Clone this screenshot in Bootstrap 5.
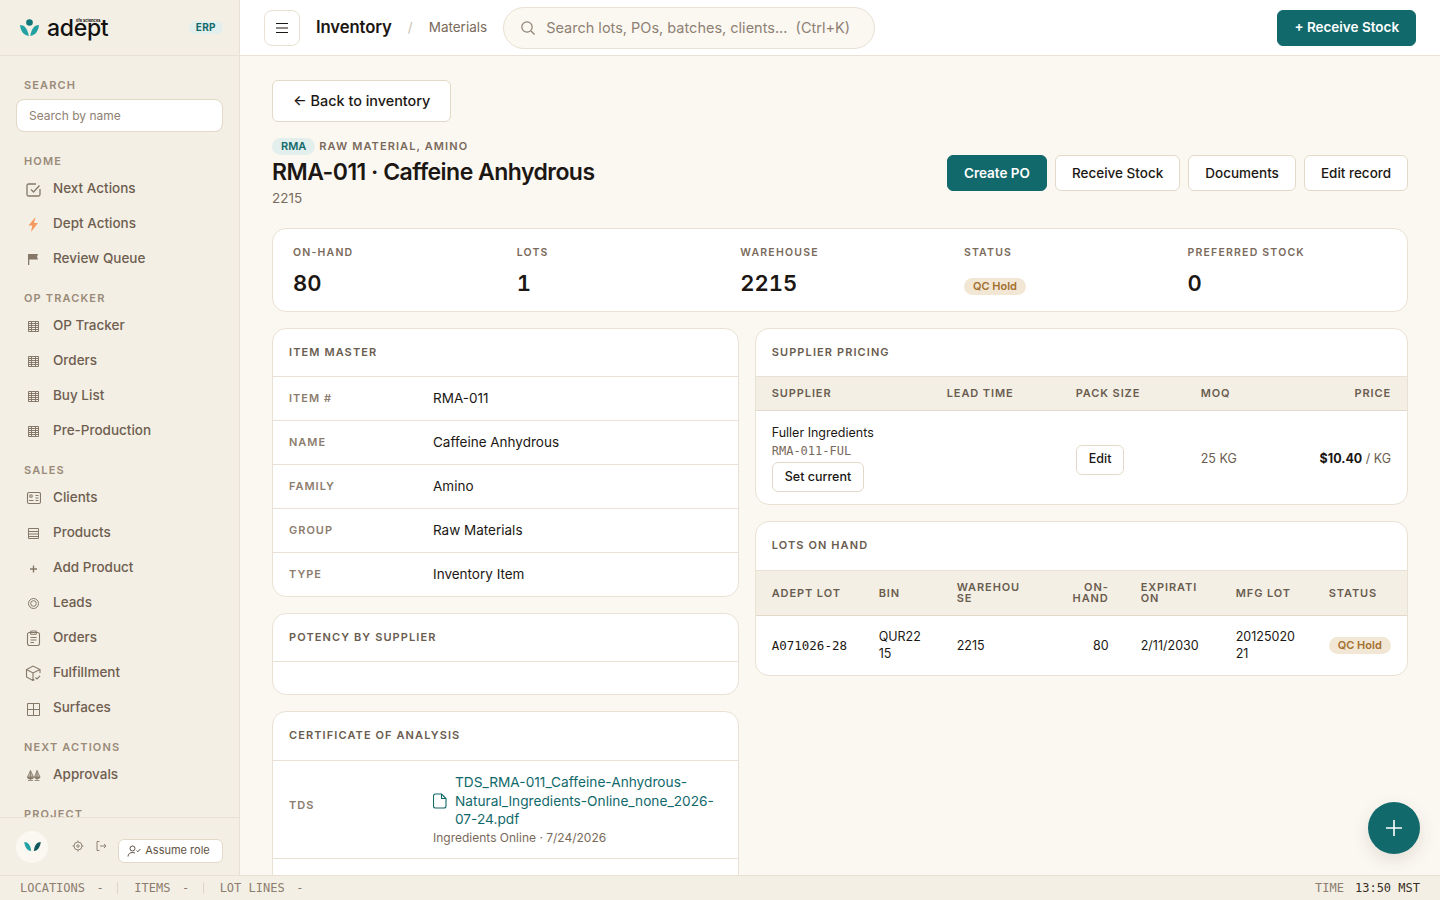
<!DOCTYPE html>
<html lang="en">
<head>
<meta charset="UTF-8">
<title>RMA-011 Caffeine Anhydrous</title>
<link href="https://cdn.jsdelivr.net/npm/bootstrap@5.3.0/dist/css/bootstrap.min.css" rel="stylesheet">
<style>
    :root { --line: #e9e1d3; --teal: #11696b; --ink: #1c1713; --mut: #7a6a5b; --sand: #f3efe5; }
    html, body { height: 100%; overflow: hidden; }
    body { font-family: "Inter", sans-serif; font-size: 13.5px; color: var(--ink); background: #fbf8f2; }
    .mono { font-family: "DejaVu Sans Mono", monospace; }
    .shell { height: 875px; }

    .side { width: 240px; flex: none; background: var(--sand); border-right: 1px solid var(--line); }
    .side-brand { height: 56px; padding: 0 16px 0 20px; border-bottom: 1px solid var(--line); }
    .brand-word { display: block; font-size: 23px; line-height: 24px; font-weight: 500; letter-spacing: -.3px; color: #111; }
    .brand-sub { position: absolute; left: 29px; top: 3px; font-size: 4px; line-height: 1; font-weight: 700; color: #111; white-space: nowrap; }
    .erp-pill { font-size: 10px; font-weight: 700; letter-spacing: .4px; color: var(--teal); background: #e3efec; border-radius: 10px; padding: 2px 7px; line-height: 9px; }
    .side-scroll { flex: 1 1 0; min-height: 0; overflow: hidden; padding: 22px 16px 0; }
    .side-label { font-size: 11px; line-height: 14px; font-weight: 600; letter-spacing: 1.15px; color: #9a8a78; padding-left: 8px; margin-bottom: 3px; }
    .side-group { margin-bottom: 15px; }
    .side-search.form-control { height: 33px; font-size: 12px; padding: 0 12px; border: 1px solid #e3d9c8; border-radius: 8px; margin-top: 7px; margin-bottom: 22px; color: var(--ink); }
    .side-search::placeholder { color: #8e8072; }
    .side-link { height: 35px; padding-left: 9px; gap: 12px; color: #6f5e50; font-weight: 500; text-decoration: none; }
    .side-link span { position: relative; top: -.5px; }
    .side-link svg { width: 16px; height: 16px; flex: none; color: #857868; }
    .side-foot { height: 58px; border-top: 1px solid var(--line); padding: 0 16px; }
    .avatar { width: 32px; height: 32px; border-radius: 50%; background: #fbf8f2; }
    .foot-icons { margin-left: 24px; gap: 11px; margin-top: -1px; color: #8f8272; }
    .foot-icons svg { width: 12px; height: 12px; }
    .assume.btn { margin-left: auto; margin-top: 8px; height: 24px; width: 105px; padding: 0 4px 0 0; font-size: 11px; color: #5f5245; background: #fff; border: 1px solid #e3d9c8; border-radius: 6px; gap: 4px; }

    .top { height: 56px; background: #fff; border-bottom: 1px solid var(--line); padding: 0 24px; }
    .burger.btn { width: 36px; height: 36px; padding: 0; border: 1px solid var(--line); border-radius: 8px; background: #fff; color: var(--ink); }
    .crumb-main { font-size: 16.7px; font-weight: 600; margin-left: 16px; letter-spacing: -.1px; }
    .crumb-sep { color: #c9bfb1; margin-left: 16px; }
    .crumb-sub { color: var(--mut); margin-left: 16px; }
    .find { width: 372px; height: 42px; margin-left: 16px; border: 1px solid var(--line); border-radius: 21px; background: #fbf8f2; padding: 0 16px; gap: 10px; color: #8e8072; font-size: 14.5px; }
    .teal-btn.btn { background: var(--teal); border-color: var(--teal); color: #fff; font-weight: 600; font-size: 13.5px; border-radius: 6px; height: 36px; padding: 0 16px; }
    .line-btn.btn { background: #fff; border: 1px solid #e3d9c8; color: var(--ink); font-weight: 500; font-size: 13.5px; border-radius: 6px; height: 36px; padding: 0 16px; }

    .page { flex: 1 1 0; min-height: 0; overflow: hidden; padding: 24px 32px 0; }
    .back.btn { height: 42px; font-size: 14.4px; padding: 0 20px; margin-bottom: 16px; border-radius: 6px; }
    .kind-pill { font-size: 11px; font-weight: 600; line-height: 17px; color: var(--teal); background: #e3efec; border-radius: 9px; padding: 0 9px; }
    .eyebrow { font-size: 11px; font-weight: 600; letter-spacing: 1.1px; color: var(--mut); margin-left: 4px; }
    .page-title { font-size: 23px; line-height: 30px; font-weight: 600; margin: 2px 0 1px; letter-spacing: -.53px; }
    .page-sub { color: var(--mut); line-height: 20px; }
    .head-actions { margin-bottom: 17px; }

    .panel.card { border: 1px solid var(--line); border-radius: 14px; background: #fff; overflow: hidden; --bs-card-inner-border-radius: 13px; }
    .stats { display: grid; grid-template-columns: repeat(5, 1fr); gap: 24px; padding: 17px 20px 0; height: 84px; margin-top: 20px; margin-bottom: 16px; }
    .stat-label { font-size: 10.5px; line-height: 14px; font-weight: 600; letter-spacing: 1.2px; color: var(--mut); }
    .stat-value { font-size: 22px; line-height: 30px; font-weight: 600; margin-top: 8px; font-variant-numeric: tabular-nums; }
    .stat-pill { margin-top: 15px; }
    .hold { display: inline-block; font-size: 11px; line-height: 17px; font-weight: 600; color: #a3702f; background: #f2e6d4; border-radius: 9px; padding: 0 9px; }
    .cols { display: grid; grid-template-columns: 5fr 7fr; gap: 16px; align-items: start; }
    .stack { display: flex; flex-direction: column; gap: 16px; }
    .panel-head { font-size: 11px; line-height: 14px; font-weight: 600; letter-spacing: 1.1px; color: #6a5c4f; padding: 16px 16px 16px; height: 47px; }
    .panel-head.tall { height: 48px; }
    .kv { display: flex; align-items: center; border-top: 1px solid var(--line); height: 44px; padding: 0 16px; }
    .kv-key { width: 144px; flex: none; font-size: 11px; font-weight: 600; letter-spacing: 1px; color: #8c7d6e; }
    .kv-key.raised { margin-bottom: 9px; }
    .file-link { color: var(--teal); text-decoration: none; font-size: 13.7px; line-height: 18.5px; display: block; }
    .file-meta { font-size: 12px; line-height: 17px; color: var(--mut); }

    .data.table { margin: 0; table-layout: fixed; font-size: 12.5px; --bs-table-border-color: var(--line); }
    .data.table th { background: var(--sand); font-size: 11px; line-height: 11px; font-weight: 600; letter-spacing: .9px; color: #6a5c4f; padding: 11px 16px; border-top: 1px solid var(--line); border-bottom: 1px solid #e3d9c8; vertical-align: middle; overflow-wrap: anywhere; }
    .data.table td { padding: 12px 16px 12px; vertical-align: middle; border-bottom: 0; color: var(--ink); overflow-wrap: anywhere; }
    .data.table td.nudge { padding-top: 16px; }
    .lots-table.table td { line-height: 17.5px; padding: 8px 16px; height: 59px; }
    .lots-table.table th { height: 45px; padding-top: 0; padding-bottom: 0; }
    .small-btn.btn { height: 30px; font-size: 12.5px; padding: 0 12px; line-height: 1; }
    .set-btn { margin-top: 2px; }
    .sup-code { font-size: 12px; color: #77695b; line-height: 18px; }
    .soft { color: #6a5c4f !important; }

    .fab { position: fixed; left: 1368px; top: 802px; width: 52px; height: 52px; border-radius: 50%; background: var(--teal); border: 0; box-shadow: 0 6px 18px rgba(60, 40, 20, .12); }
    .status { height: 25px; background: var(--sand); border-top: 1px solid var(--line); padding: 0 20px; font-size: 12px; color: #8c7d6e; }
    .status-sep { width: 1px; height: 12px; background: #e0d5c3; margin: 0 16px 0 13.5px; }
    .status-dash { margin-left: 11.5px; }
    .status-time { margin-left: 11px; color: #3a2f26; }
</style>
</head>
<body>
<div class="shell d-flex">
    <aside class="side d-flex flex-column">
        <div class="side-brand d-flex align-items-center justify-content-between">
            <div class="d-flex align-items-center gap-2">
                <svg width="19" height="18" viewBox="0 0 19 18"><circle cx="9.500" cy="3.500" r="3.300" fill="#11787a"/><path d="M0 6c4 0 7.500 3 8.800 11C3.500 16.500.5 11.500 0 6z" fill="#22a0a2"/><path d="M19 6c-4 0-7.500 3-8.800 11C15.500 16.500 18.500 11.500 19 6z" fill="#22a0a2"/></svg>
                <div class="position-relative"><span class="brand-word">adept</span><span class="brand-sub">life sciences</span></div>
            </div>
            <span class="erp-pill">ERP</span>
        </div>
        <div class="side-scroll">
            <div class="side-label">SEARCH</div>
            <input class="form-control side-search" placeholder="Search by name">

            <div class="side-group">
                <div class="side-label">HOME</div>
                <a class="side-link d-flex align-items-center" href="#"><svg viewBox="0 0 16 16" fill="none" stroke="currentColor" stroke-width="1.300" overflow="visible"><path d="M15 8v5.500a1.500 1.500 0 0 1-1.500 1.500h-10A1.500 1.500 0 0 1 2 13.500V4.500A1.500 1.500 0 0 1 3.500 3H11"/><path d="M6 8.500 8.500 11l6-6.500"/></svg><span>Next Actions</span></a>
                <a class="side-link d-flex align-items-center" href="#"><svg viewBox="0 0 16 16"><path d="M10.500 1 3.500 9.500h3.800L6 16 13 7H9z" fill="#f59a5f"/></svg><span>Dept Actions</span></a>
                <a class="side-link d-flex align-items-center" href="#"><svg viewBox="0 0 16 16"><path d="M3 3h10l-1 2.800 1 2.700H4.300V14H3z" fill="currentColor"/></svg><span>Review Queue</span></a>
            </div>
            <div class="side-group">
                <div class="side-label">OP TRACKER</div>
                <a class="side-link d-flex align-items-center" href="#"><svg viewBox="0 0 16 16" fill="none" stroke="currentColor"><path d="M3.500 3.500h10v10h-10zM3.500 5.500h10M3.500 7.500h10M3.500 9.500h10M3.500 11.500h10M6.500 3.500v10M10.500 3.500v10"/></svg><span>OP Tracker</span></a>
                <a class="side-link d-flex align-items-center" href="#"><svg viewBox="0 0 16 16" fill="none" stroke="currentColor"><path d="M3.500 3.500h10v10h-10zM3.500 5.500h10M3.500 7.500h10M3.500 9.500h10M3.500 11.500h10M6.500 3.500v10M10.500 3.500v10"/></svg><span>Orders</span></a>
                <a class="side-link d-flex align-items-center" href="#"><svg viewBox="0 0 16 16" fill="none" stroke="currentColor"><path d="M3.500 3.500h10v10h-10zM3.500 5.500h10M3.500 7.500h10M3.500 9.500h10M3.500 11.500h10M6.500 3.500v10M10.500 3.500v10"/></svg><span>Buy List</span></a>
                <a class="side-link d-flex align-items-center" href="#"><svg viewBox="0 0 16 16" fill="none" stroke="currentColor"><path d="M3.500 3.500h10v10h-10zM3.500 5.500h10M3.500 7.500h10M3.500 9.500h10M3.500 11.500h10M6.500 3.500v10M10.500 3.500v10"/></svg><span>Pre-Production</span></a>
            </div>
            <div class="side-group">
                <div class="side-label">SALES</div>
                <a class="side-link d-flex align-items-center" href="#"><svg viewBox="0 0 16 16" fill="none" stroke="currentColor" stroke-width="1.100"><rect x="2.500" y="2.500" width="13" height="11" rx="1.500"/><circle cx="6" cy="6" r="1.300"/><path d="M4 10.500h4.500M10.500 5.500h3M10.500 8h3M10.500 10.500h3"/></svg><span>Clients</span></a>
                <a class="side-link d-flex align-items-center" href="#"><svg viewBox="0 0 16 16" fill="none" stroke="currentColor"><path d="M3.500 3.500h10v10h-10zM3.500 6.500h10M3.500 9h10M3.500 11.500h10"/></svg><span>Products</span></a>
                <a class="side-link d-flex align-items-center" href="#"><svg viewBox="0 0 16 16" fill="none" stroke="currentColor" stroke-width="1.400"><path d="M8.500 5.500v7M5 9h7"/></svg><span>Add Product</span></a>
                <a class="side-link d-flex align-items-center" href="#"><svg viewBox="0 0 16 16" fill="none" stroke="currentColor"><circle cx="8.500" cy="8.500" r="5"/><circle cx="8.500" cy="8.500" r="2.800"/></svg><span>Leads</span></a>
                <a class="side-link d-flex align-items-center" href="#"><svg viewBox="0 0 16 16" fill="none" stroke="currentColor" stroke-width="1.100"><rect x="2.500" y="2.500" width="12" height="13" rx="2"/><rect x="5.500" y="1" width="6" height="3.200" rx="1"/><path d="M5.500 7.500h6M5.500 10h6M5.500 12.500h3.500"/></svg><span>Orders</span></a>
                <a class="side-link d-flex align-items-center" href="#"><svg viewBox="0 0 16 16" fill="none" stroke="currentColor" stroke-width="1.100"><path d="M15 8V4.500L8 1 1.500 4.500V12L8 15.500l1.500-.9M1.500 4.500 8 8l7-3.500M8 8v7.500"/><path d="M10.500 12.500l1.500 1.500 3-3.200"/></svg><span>Fulfillment</span></a>
                <a class="side-link d-flex align-items-center" href="#"><svg viewBox="0 0 16 16" fill="none" stroke="currentColor"><path d="M2.500 3.500h12v12h-12zM8.500 3.500v12M2.500 9.500h12"/></svg><span>Surfaces</span></a>
            </div>
            <div class="side-group">
                <div class="side-label">NEXT ACTIONS</div>
                <a class="side-link d-flex align-items-center" href="#"><svg viewBox="0 0 16 16" fill="currentColor" stroke="currentColor" stroke-width=".8"><path d="M5.500 3.500 2.500 10h6zM12 3.500 9.500 10h5.500z" fill-opacity=".45"/><path d="M5.500 3.500V13M12 3.500V13M3 13.500h5M9.500 13.500h5M2.500 10.500a3 1.500 0 0 0 6 0zM9.500 10.500a2.800 1.500 0 0 0 5.500 0z"/></svg><span>Approvals</span></a>
            </div>
            <div class="side-label">PROJECT</div>
        </div>
        <div class="side-foot d-flex align-items-center">
            <div class="avatar d-flex align-items-center justify-content-center">
                <svg width="17" height="11" viewBox="0 0 18 12"><path d="M0 1c4 0 7 3 7.500 10C3 10.500.5 6 0 1z" fill="#22a0a2"/><path d="M18 1c-4 0-7 3-7.500 10C15 10.500 17.500 6 18 1z" fill="#11585c"/></svg>
            </div>
            <div class="foot-icons d-flex">
                <svg viewBox="0 0 12 12" fill="none" stroke="currentColor"><circle cx="6" cy="6" r="4"/><circle cx="6" cy="6" r="1.200"/><path d="M6 .5v1.500M6 10v1.500M.5 6H2M10 6h1.500"/></svg>
                <svg viewBox="0 0 12 12" fill="none" stroke="currentColor"><path d="M4.500 1.500H2v9h2.500M5 6h6M9 4l2 2-2 2"/></svg>
            </div>
            <button class="btn assume d-flex align-items-center justify-content-center" type="button">
                <svg width="14" height="12" viewBox="0 0 14 12" fill="none" stroke="currentColor"><circle cx="5.500" cy="3.500" r="2.500"/><path d="M1 11.500c0-2.500 2-4 4.500-4 1 0 1.800.2 2.500.6M9.500 5.500l1.300 1.300 2.500-2.800"/></svg>
                Assume role
            </button>
        </div>
    </aside>

    <div class="flex-grow-1 d-flex flex-column" style="min-width:0">
        <header class="top d-flex align-items-center">
            <button class="btn burger d-flex align-items-center justify-content-center" type="button" aria-label="Menu">
                <svg width="12" height="12" viewBox="0 0 12 12" stroke="currentColor" stroke-width="1.200"><path d="M0 1.500h12M0 6h12M0 10.500h12"/></svg>
            </button>
            <span class="crumb-main">Inventory</span>
            <span class="crumb-sep">/</span>
            <span class="crumb-sub">Materials</span>
            <div class="find d-flex align-items-center">
                <svg width="16" height="16" viewBox="0 0 16 16" fill="none" stroke="currentColor" stroke-width="1.200"><circle cx="7" cy="7" r="5.200"/><path d="M11 11l3.500 3.500"/></svg>
                <span>Search lots, POs, batches, clients...&nbsp; (Ctrl+K)</span>
            </div>
            <button class="btn teal-btn ms-auto" type="button">+ Receive Stock</button>
        </header>

        <main class="page">
            <button class="btn line-btn back" type="button">← Back to inventory</button>
            <div class="d-flex justify-content-between align-items-end">
                <div>
                    <div class="d-flex align-items-center">
                        <span class="kind-pill">RMA</span>
                        <span class="eyebrow">RAW MATERIAL, AMINO</span>
                    </div>
                    <h1 class="page-title">RMA-011 · Caffeine Anhydrous</h1>
                    <div class="page-sub">2215</div>
                </div>
                <div class="d-flex gap-2 head-actions">
                    <button class="btn teal-btn" type="button">Create PO</button>
                    <button class="btn line-btn" type="button">Receive Stock</button>
                    <button class="btn line-btn" type="button">Documents</button>
                    <button class="btn line-btn" type="button">Edit record</button>
                </div>
            </div>

            <div class="card panel stats">
                <div><div class="stat-label">ON-HAND</div><div class="stat-value">80</div></div>
                <div><div class="stat-label">LOTS</div><div class="stat-value">1</div></div>
                <div><div class="stat-label">WAREHOUSE</div><div class="stat-value">2215</div></div>
                <div><div class="stat-label">STATUS</div><div class="stat-pill"><span class="hold">QC Hold</span></div></div>
                <div><div class="stat-label">PREFERRED STOCK</div><div class="stat-value">0</div></div>
            </div>

            <div class="cols">
                <div class="stack">
                    <section class="card panel">
                        <div class="panel-head">ITEM MASTER</div>
                        <div class="kv"><span class="kv-key">ITEM #</span><span>RMA-011</span></div>
                        <div class="kv"><span class="kv-key">NAME</span><span>Caffeine Anhydrous</span></div>
                        <div class="kv"><span class="kv-key">FAMILY</span><span>Amino</span></div>
                        <div class="kv"><span class="kv-key">GROUP</span><span>Raw Materials</span></div>
                        <div class="kv"><span class="kv-key">TYPE</span><span>Inventory Item</span></div>
                    </section>
                    <section class="card panel">
                        <div class="panel-head">POTENCY BY SUPPLIER</div>
                        <div class="kv" style="height:33px"></div>
                    </section>
                    <section class="card panel">
                        <div class="panel-head tall">CERTIFICATE OF ANALYSIS</div>
                        <div class="kv" style="height:98px">
                            <span class="kv-key raised">TDS</span>
                            <div>
                                <div class="d-flex align-items-center gap-2">
                                    <svg width="14" height="16" viewBox="0 0 14 16" fill="none" stroke="#11696b" stroke-width="1.100" class="flex-shrink-0"><path d="M2.500 1h6l4.500 4.500V13a2 2 0 0 1-2 2H2.500a2 2 0 0 1-2-2V3a2 2 0 0 1 2-2z"/><path d="M8.500 1v4.500H13"/></svg>
                                    <a class="file-link" href="#">TDS_RMA-011_Caffeine-Anhydrous-Natural_Ingredients-Online_none_2026-07-24.pdf</a>
                                </div>
                                <div class="file-meta">Ingredients Online · 7/24/2026</div>
                            </div>
                        </div>
                        <div class="kv"></div>
                    </section>
                </div>
                <div class="stack">
                    <section class="card panel">
                        <div class="panel-head">SUPPLIER PRICING</div>
                        <table class="table data">
                            <colgroup><col style="width:175px"><col style="width:129px"><col style="width:125px"><col style="width:100px"><col></colgroup>
                            <thead><tr><th>SUPPLIER</th><th>LEAD TIME</th><th>PACK SIZE</th><th>MOQ</th><th class="text-end">PRICE</th></tr></thead>
                            <tbody><tr>
                                <td>
                                    <div style="line-height:19px">Fuller Ingredients</div>
                                    <div class="mono sup-code">RMA-011-FUL</div>
                                    <button class="btn line-btn small-btn set-btn" type="button">Set current</button>
                                </td>
                                <td></td>
                                <td><button class="btn line-btn small-btn mt-1" type="button">Edit</button></td>
                                <td class="soft nudge">25 KG</td>
                                <td class="text-end text-nowrap nudge"><strong>$10.40</strong> <span class="soft">/ KG</span></td>
                            </tr></tbody>
                        </table>
                    </section>
                    <section class="card panel">
                        <div class="panel-head tall">LOTS ON HAND</div>
                        <table class="table data lots-table">
                            <colgroup><col style="width:107px"><col style="width:78px"><col style="width:96px"><col style="width:88px"><col style="width:95px"><col style="width:93px"><col></colgroup>
                            <thead><tr><th>ADEPT LOT</th><th>BIN</th><th>WAREHOUSE</th><th class="text-end">ON-HAND</th><th>EXPIRATION</th><th>MFG LOT</th><th>STATUS</th></tr></thead>
                            <tbody><tr>
                                <td class="mono text-nowrap">A071026-28</td>
                                <td>QUR2215</td>
                                <td>2215</td>
                                <td class="text-end">80</td>
                                <td>2/11/2030</td>
                                <td>2012502021</td>
                                <td><span class="hold text-nowrap">QC Hold</span></td>
                            </tr></tbody>
                        </table>
                    </section>
                </div>
            </div>
        </main>
    </div>
</div>

<button class="fab d-flex align-items-center justify-content-center" type="button" aria-label="Add">
    <svg width="16" height="16" viewBox="0 0 16 16" stroke="#fff" stroke-width="1.600"><path d="M8 0v16M0 8h16"/></svg>
</button>

<footer class="status mono d-flex align-items-center">
    <span>LOCATIONS</span><span class="status-dash">-</span><span class="status-sep"></span>
    <span>ITEMS</span><span class="status-dash">-</span><span class="status-sep"></span>
    <span>LOT LINES</span><span class="status-dash">-</span>
    <span class="ms-auto">TIME</span><span class="status-time">13:50 MST</span>
</footer>
<script src="https://cdn.jsdelivr.net/npm/bootstrap@5.3.0/dist/js/bootstrap.bundle.min.js"></script>
</body>
</html>
